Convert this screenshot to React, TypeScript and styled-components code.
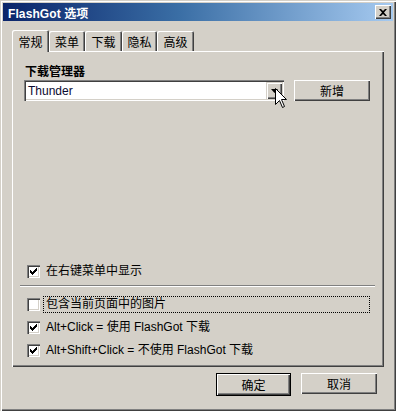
import React from 'react';
import styled, { createGlobalStyle } from 'styled-components';

const GlobalStyle = createGlobalStyle`
  html, body {
    margin: 0;
    padding: 0;
    background: #d4d0c8;
  }
  * { box-sizing: border-box; }
`;

const FONT = '"Liberation Sans", "Noto Sans CJK SC", sans-serif';

const Window = styled.div`
  width: 396px;
  height: 411px;
  background: #d4d0c8;
  padding: 3px;
  display: flex;
  flex-direction: column;
  font-family: ${FONT};
  font-size: 12px;
  color: #000;
  box-shadow: inset 1px 1px 0 #d4d0c8, inset 2px 2px 0 #ffffff,
    inset -1px -1px 0 #404040, inset -2px -2px 0 #808080;
`;

const TitleBar = styled.div`
  height: 18px;
  display: flex;
  align-items: center;
  justify-content: space-between;
  padding: 0 2px 0 5px;
  background: linear-gradient(to right, #0a246a 0%, #3a6ea5 45%, #a6caf0 100%);
`;

const Title = styled.span`
  color: #fff;
  font-weight: bold;
  font-size: 12px;
  letter-spacing: 0.1px;
`;

const CloseButton = styled.div`
  width: 16px;
  height: 14px;
  background: #d4d0c8;
  display: flex;
  align-items: center;
  justify-content: center;
  box-shadow: inset 1px 1px 0 #ffffff, inset -1px -1px 0 #404040,
    inset -2px -2px 0 #808080;
`;

const Body = styled.div`
  flex: 1;
  display: flex;
  flex-direction: column;
  padding: 9px 0 0 9px;
`;

const TabRow = styled.div`
  display: flex;
  height: 21px;
  align-items: flex-end;
  position: relative;
  z-index: 1;
`;

const Tab = styled.div<{ $active?: boolean; $w: number }>`
  width: ${(p) => p.$w}px;
  height: ${(p) => (p.$active ? 22 : 20)}px;
  margin-bottom: ${(p) => (p.$active ? -1 : 0)}px;
  display: flex;
  align-items: center;
  justify-content: center;
  padding-top: ${(p) => (p.$active ? 0 : 1)}px;
  background: #d4d0c8;
  border-top-left-radius: 2px;
  border-top-right-radius: 2px;
  box-shadow: inset 1px 1px 0 #ffffff, inset -1px 0 0 #404040,
    inset -2px 0 0 #808080;
  font-size: 12px;
  font-family: "Noto Sans CJK SC", sans-serif;
`;

const Panel = styled.div`
  width: 372px;
  height: 316px;
  display: flex;
  flex-direction: column;
  padding: 1px 9px 8px 8px;
  box-shadow: inset 1px 1px 0 #ffffff, inset -1px -1px 0 #404040,
    inset -2px -2px 0 #808080;
`;

const GroupLabel = styled.div`
  margin: 11px 0 0 5px;
  height: 16px;
  line-height: 16px;
  font-weight: bold;
  font-family: "Noto Sans CJK SC", sans-serif;
  font-size: 12px;
`;

const ComboRow = styled.div`
  display: flex;
  gap: 10px;
  margin: 1px 0 0 4px;
`;

const Combo = styled.div`
  position: relative;
  width: 260px;
  height: 21px;
  background: #fff;
  display: flex;
  align-items: center;
  padding: 0 2px 0 4px;
  box-shadow: inset 1px 1px 0 #808080, inset 2px 2px 0 #404040,
    inset -1px -1px 0 #ffffff, inset -2px -2px 0 #d4d0c8;
`;

const ComboText = styled.span`
  flex: 1;
  font-size: 12px;
  color: #0a0a30;
`;

const DropButton = styled.div`
  width: 16px;
  height: 17px;
  background: #d4d0c8;
  display: flex;
  align-items: center;
  justify-content: center;
  box-shadow: inset 1px 1px 0 #d4d0c8, inset 2px 2px 0 #ffffff,
    inset -1px -1px 0 #404040, inset -2px -2px 0 #808080;
`;

const Button = styled.div<{ $default?: boolean }>`
  width: ${(p) => (p.$default ? 75 : 76)}px;
  height: ${(p) => (p.$default ? 23 : 21)}px;
  display: flex;
  align-items: center;
  justify-content: center;
  background: #d4d0c8;
  font-family: "Noto Sans CJK SC", sans-serif;
  font-size: 12px;
  box-shadow: ${(p) =>
    p.$default
      ? 'inset 0 0 0 1px #000, inset 2px 2px 0 #ffffff, inset -2px -2px 0 #404040, inset -3px -3px 0 #808080'
      : 'inset 1px 1px 0 #ffffff, inset -1px -1px 0 #404040, inset -2px -2px 0 #808080'};
`;

const Spacer = styled.div`
  flex: 1;
`;

const CheckRow = styled.div`
  height: 18px;
  display: flex;
  align-items: center;
  padding-left: 7px;
`;

const Box = styled.div`
  width: 13px;
  height: 13px;
  background: #fff;
  display: flex;
  align-items: center;
  justify-content: center;
  box-shadow: inset 1px 1px 0 #808080, inset 2px 2px 0 #404040,
    inset -1px -1px 0 #ffffff, inset -2px -2px 0 #d4d0c8;
`;

const CheckText = styled.span<{ $focus?: boolean }>`
  margin-left: 3px;
  flex: ${(p) => (p.$focus ? '0 0 327px' : '0 0 auto')};
  height: 17px;
  line-height: 15px;
  padding: 0 2px;
  border: 1px ${(p) => (p.$focus ? 'dotted #000' : 'solid transparent')};
  white-space: nowrap;
  font-size: 12px;
`;

const Separator = styled.div`
  height: 2px;
  margin: 5px 0 8px;
  border-top: 1px solid #808080;
  border-bottom: 1px solid #ffffff;
`;

const Rows = styled.div`
  display: flex;
  flex-direction: column;
  gap: 5px;
`;

const Footer = styled.div`
  display: flex;
  justify-content: flex-end;
  gap: 10px;
  margin-top: 6px;
  padding-right: 16px;
`;

const Cursor = styled.svg`
  position: absolute;
  left: 251px;
  top: 8px;
  pointer-events: none;
`;

const CheckMark = () => (
  <svg width="7" height="7" viewBox="0 0 7 7">
    <path d="M0 2h1v1h1v1h1V3h1V2h1V1h1V0h1v3H6v1H5v1H4v1H3v1H2V6H1V5H0z" fill="#000" />
  </svg>
);

const Check = ({ checked }: { checked: boolean }) => <Box>{checked && <CheckMark />}</Box>;

const tabs = [
  { label: '常规', w: 37, active: true },
  { label: '菜单', w: 36 },
  { label: '下载', w: 37 },
  { label: '隐私', w: 35 },
  { label: '高级', w: 37 },
];

export default function App() {
  return (
    <>
      <GlobalStyle />
      <Window>
        <TitleBar>
          <Title>FlashGot 选项</Title>
          <CloseButton>
            <svg width="8" height="7" viewBox="0 0 8 7">
              <path d="M0 0h2l2 2 2-2h2L5 3.5 8 7H6L4 5 2 7H0l3-3.5z" fill="#000" />
            </svg>
          </CloseButton>
        </TitleBar>
        <Body>
          <TabRow>
            {tabs.map((t) => (
              <Tab key={t.label} $active={t.active} $w={t.w}>
                {t.label}
              </Tab>
            ))}
          </TabRow>
          <Panel>
            <GroupLabel>下载管理器</GroupLabel>
            <ComboRow>
              <Combo>
                <ComboText>Thunder</ComboText>
                <DropButton>
                  <svg width="7" height="4" viewBox="0 0 7 4">
                    <path d="M0 0h7L3.5 4z" fill="#000" />
                  </svg>
                </DropButton>
                <Cursor width="13" height="21" viewBox="0 0 13 21">
                  <path
                    d="M0.5 0.5V16.5L4.5 12.5L7.5 19.5L9.5 18.5L6.5 11.5H11.5Z"
                    fill="#fff"
                    stroke="#000"
                    strokeWidth="1"
                  />
                </Cursor>
              </Combo>
              <Button>新增</Button>
            </ComboRow>
            <Spacer />
            <CheckRow>
              <Check checked />
              <CheckText>在右键菜单中显示</CheckText>
            </CheckRow>
            <Separator />
            <Rows>
              <CheckRow>
                <Check checked={false} />
                <CheckText $focus>包含当前页面中的图片</CheckText>
              </CheckRow>
              <CheckRow>
                <Check checked />
                <CheckText>Alt+Click = 使用 FlashGot 下载</CheckText>
              </CheckRow>
              <CheckRow>
                <Check checked />
                <CheckText>Alt+Shift+Click = 不使用 FlashGot 下载</CheckText>
              </CheckRow>
            </Rows>
          </Panel>
          <Footer>
            <Button $default>确定</Button>
            <Button>取消</Button>
          </Footer>
        </Body>
      </Window>
    </>
  );
}
